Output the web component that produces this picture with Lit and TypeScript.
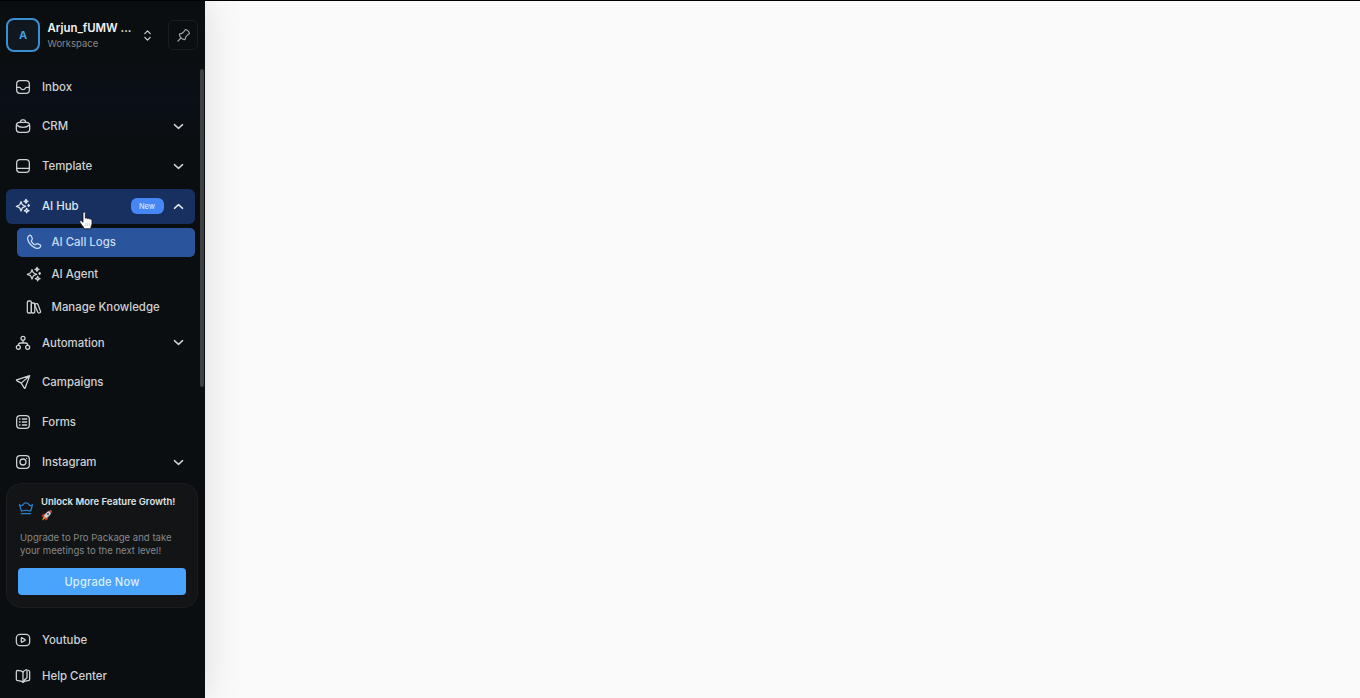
import { LitElement, html, css, svg, nothing } from "lit";
import { customElement, property } from "lit/decorators.js";
import { classMap } from "lit/directives/class-map.js";

const icons: Record<string, unknown> = {
  inbox: svg`
    <rect x="2.5" y="2.5" width="19" height="19" rx="5" />
    <path d="M2.5 12.5H6.6C7.6 12.5 8.1 13.2 8.5 14C9 15.2 9.8 16 12 16S15 15.2 15.5 14C15.9 13.2 16.4 12.5 17.4 12.5H21.5" />`,
  crm: svg`
    <rect x="2" y="6.5" width="20" height="15" rx="5" />
    <path d="M2.3 10.5C5 13 8.5 14 12 14S19 13 21.7 10.5M10.5 14H13.5M8 6.3C8.3 3.8 9 2.7 10.8 2.7H13.2C15 2.7 15.7 3.8 16 6.3" />`,
  template: svg`
    <rect x="2.5" y="2.5" width="19" height="19" rx="5" />
    <path d="M2.5 15.5H21.5" />`,
  sparkles: svg`
    <path d="M9 5.5L10.2 8.6C10.8 10.1 11.4 10.7 12.9 11.3L16 12.5L12.9 13.7C11.4 14.3 10.8 14.9 10.2 16.4L9 19.5L7.8 16.4C7.2 14.9 6.6 14.3 5.1 13.7L2 12.5L5.1 11.3C6.6 10.7 7.2 10.1 7.8 8.6Z" />
    <path d="M16.5 2L17.4 4.1L19.5 5L17.4 5.9L16.5 8L15.6 5.9L13.5 5L15.6 4.1Z" />
    <path d="M17.5 15.5L18.5 18L21 19L18.5 20L17.5 22.2L16.5 20L14 19L16.5 18Z" />
    <path d="M20.5 9.8L21.6 11.2L20.5 12.6L19.4 11.2Z" />`,
  phone: svg`
    <path d="M9.2 5.9L8.5 4.4C8.1 3.4 7.9 2.9 7.5 2.6C6.9 2 5.3 1.9 4.4 2.7C2.7 4 2 5.9 2.6 8.2C3.2 10.7 4.9 13.9 7.5 16.5S13.3 20.8 15.8 21.4C18.1 22 20 21.3 21.3 19.6C22.1 18.7 22 17.1 21.4 16.5C21.1 16.1 20.6 15.9 19.6 15.5L18.1 14.8C16.6 14.2 16.1 14.4 15 15.3C13.9 16.3 13.1 16.2 11.9 15.3C10.6 14.4 9.5 13.3 8.7 12.1C7.8 10.9 7.7 10.1 8.7 9C9.6 7.9 9.8 7.4 9.2 5.9Z" />`,
  library: svg`
    <rect x="2" y="3" width="6" height="18" rx="2" />
    <rect x="8" y="6" width="5.2" height="15" rx="1.8" />
    <path d="M13.2 9.2C13.1 8.2 13.5 7.7 14.4 7.4L15.8 7C16.9 6.7 17.4 7 17.8 8L21.8 18.6C22.1 19.6 21.8 20.2 21 20.5L19.6 20.9C18.7 21.2 18.1 20.9 17.7 20Z" />`,
  automation: svg`
    <circle cx="12" cy="5" r="3" />
    <circle cx="5" cy="18.5" r="3" />
    <circle cx="19" cy="18.5" r="3" />
    <path d="M12 8V12M5 15.5C5 13.2 6 12 8.2 12H15.8C18 12 19 13.2 19 15.5" />`,
  campaigns: svg`
    <path d="M22 2.5L2.5 8.7C2 9 2.1 9.7 2.6 10L9.3 13.7L14 21.2C14.4 21.8 15 21.7 15.2 21.1L22 2.5ZM22 2.5L9.3 13.7" />`,
  forms: svg`
    <rect x="2.5" y="2.5" width="19" height="19" rx="5" />
    <path d="M11 7.5H17.5M11 12H17.5M11 16.5H17.5M6.7 7.5H7.6M6.7 12H7.6M6.7 16.5H7.6" />`,
  instagram: svg`
    <rect x="2.5" y="2.5" width="19" height="19" rx="5" />
    <circle cx="12" cy="12" r="4.5" />
    <path d="M17.4 6.5H17.6" />`,
  youtube: svg`
    <rect x="2" y="3.5" width="20" height="17" rx="5.5" />
    <path d="M9.5 9V15C9.5 15.4 9.9 15.6 10.3 15.4L15.1 12.5C15.5 12.2 15.5 11.8 15.1 11.5L10.3 8.6C9.9 8.4 9.5 8.6 9.5 9Z" />`,
  help: svg`
    <path d="M12 6C10.5 4.3 7.8 3.6 4.2 3.5C2.9 3.5 2 4.2 2 5.5V16.8C2 18.2 2.7 18.8 4.2 18.9C7.8 19.1 10.5 19.8 12 21.5V6Z" />
    <path d="M12 21.5C13.5 19.8 16.2 19.1 19.8 18.9C21.3 18.8 22 18.2 22 16.8V5.5C22 4.3 21.2 3.7 20 3.5M12 6C13 4.7 14.6 3.6 16.6 2.6C17.5 2.2 18 2.6 18 3.5V14C18 15 17.4 15.6 16.6 16C14.6 17 13 18.5 12 21.5" />`,
  pin: svg`
    <path d="M3 21L8 16M13.3 18.6C9.6 17.7 6.3 14.4 5.4 10.7C5.2 10 5.5 9.5 6.2 9.2C7.6 8.7 9 9.1 10.3 8L13.8 4.5C14.4 3.8 14.3 2.8 15.5 2.6C17.4 2.3 21.7 6.6 21.4 8.5C21.2 9.7 20.2 9.6 19.5 10.2L16 13.7C14.9 15 15.3 16.4 14.8 17.8C14.5 18.5 14 18.8 13.3 18.6Z" />`,
  crown: svg`
    <path d="M5 16.5L2.2 7C4.5 9 6.8 8.6 8 6.5C9 3.5 15 3.5 16 6.5C17.2 8.6 19.5 9 21.8 7L19 16.5C14.5 15.5 9.5 15.5 5 16.5ZM5 20.5H19" />`,
  down: svg`<path d="M5.5 9L12 15L18.5 9" />`,
  up: svg`<path d="M5.5 15L12 9L18.5 15" />`,
  sort: svg`<path d="M7 8.5L12 3.5L17 8.5M7 15.5L12 20.5L17 15.5" />`,
};

@customElement("app-icon")
export class AppIcon extends LitElement {
  @property() name = "";

  static styles = css`
    :host {
      display: flex;
      flex: none;
      width: 16px;
      height: 16px;
    }

    svg {
      width: 100%;
      height: 100%;
      fill: none;
      stroke: currentColor;
      stroke-width: var(--icon-stroke, 1.9);
      stroke-linecap: round;
      stroke-linejoin: round;
    }
  `;

  render() {
    return html`<svg viewBox="0 0 24 24">${icons[this.name]}</svg>`;
  }
}

interface NavItem {
  label: string;
  icon: string;
  menu?: boolean;
  badge?: string;
  active?: boolean;
  children?: NavItem[];
}

const navItems: NavItem[] = [
  { label: "Inbox", icon: "inbox" },
  { label: "CRM", icon: "crm", menu: true },
  { label: "Template", icon: "template", menu: true },
  {
    label: "AI Hub",
    icon: "sparkles",
    menu: true,
    badge: "New",
    active: true,
    children: [
      { label: "AI Call Logs", icon: "phone", active: true },
      { label: "AI Agent", icon: "sparkles" },
      { label: "Manage Knowledge", icon: "library" },
    ],
  },
  { label: "Automation", icon: "automation", menu: true },
  { label: "Campaigns", icon: "campaigns" },
  { label: "Forms", icon: "forms" },
  { label: "Instagram", icon: "instagram", menu: true },
];

const footerItems: NavItem[] = [
  { label: "Youtube", icon: "youtube" },
  { label: "Help Center", icon: "help" },
];

@customElement("app-upgrade")
export class AppUpgrade extends LitElement {
  static styles = css`
    :host {
      display: block;
      box-sizing: border-box;
      height: 125px;
      margin: 1px 7px 0 6px;
      padding: 11px 11px 11px;
      border: 1px solid #1b1d20;
      border-radius: 15px;
      background: #121416;
    }

    .head {
      display: flex;
      align-items: center;
      gap: 7px;
      color: #dde3e6;
      font-size: 9.5px;
      font-weight: 600;
      line-height: 14px;
      white-space: nowrap;
    }

    .head app-icon {
      width: 16px;
      height: 16px;
      color: #2d7fca;
    }

    .rocket {
      display: block;
      width: 11px;
      height: 11px;
      margin-top: 1px;
    }

    p {
      margin: 10px 0 0 2px;
      color: #85888b;
      font-size: 9.55px;
      line-height: 13px;
      white-space: nowrap;
    }

    button {
      display: block;
      width: 168px;
      height: 27px;
      margin-top: 11px;
      padding: 0;
      border: 0;
      border-radius: 4px;
      background: #4ba4fc;
      color: #d9f0ff;
      font: 500 11.1px Inter, sans-serif;
      letter-spacing: 0.2px;
    }
  `;

  render() {
    return html`
      <div class="head">
        <app-icon name="crown"></app-icon>
        <div>
          Unlock More Feature Growth!
          <svg class="rocket" viewBox="0 0 22 22">
            <path d="M9 7L3 9L1 14L7 13Z" fill="#c9412f" />
            <path d="M15 13L13 19L8 21L9 15Z" fill="#c9412f" />
            <path d="M6 12L10 16L7 18L2 21L4 16Z" fill="#f0912e" />
            <path d="M21 1C15 1 10 4 6 12L10 16C18 12 21 7 21 1Z" fill="#cfd3d8" />
            <path d="M21 1L15 2L20 7Z" fill="#d0473b" />
            <circle cx="14" cy="8" r="2.2" fill="#3f566b" />
          </svg>
        </div>
      </div>
      <p>Upgrade to Pro Package and take<br />your meetings to the next level!</p>
      <button>Upgrade Now</button>
    `;
  }
}

@customElement("app-sidebar")
export class AppSidebar extends LitElement {
  static styles = css`
    :host {
      display: flex;
      flex-direction: column;
      flex: none;
      width: 205px;
      background: linear-gradient(#0b0e10 8%, #0a0f18 14%, #0b0e10 21%);
      box-shadow: 0 0 36px rgba(0, 0, 0, 0.13);
      color: #cfd2d4;
    }

    header {
      display: flex;
      align-items: center;
      height: 68px;
      padding: 0 6px;
      box-sizing: border-box;
      flex: none;
    }

    .avatar {
      display: grid;
      place-items: center;
      box-sizing: border-box;
      width: 34px;
      height: 34px;
      border: 2px solid #3a8fd3;
      border-radius: 8px;
      background: #10171e;
      color: #429ce4;
      font-size: 11px;
      font-weight: 700;
    }

    .workspace {
      width: 93px;
      margin-left: 7.5px;
      white-space: nowrap;
    }

    .workspace strong {
      display: block;
      color: #f2f3f4;
      font-size: 11.4px;
      font-weight: 600;
      line-height: 16px;
    }

    .workspace span {
      display: block;
      color: #85888b;
      font-size: 9.5px;
      line-height: 15px;
    }

    .sort {
      --icon-stroke: 2.2;
      width: 13px;
      height: 13px;
    }

    .pin {
      display: grid;
      place-items: center;
      box-sizing: border-box;
      width: 30px;
      height: 30px;
      margin-left: 14.5px;
      border: 1px solid #1a1d1f;
      border-radius: 5px;
      color: #a3a6a8;
    }

    .pin app-icon {
      width: 15px;
      height: 15px;
    }

    .scroller {
      display: flex;
      justify-content: space-between;
      height: 413px;
      overflow: hidden;
      flex: none;
    }

    .thumb {
      width: 4px;
      height: 318px;
      margin-right: 1px;
      border-radius: 2px;
      background: #3e4042;
    }

    nav {
      display: flex;
      flex-direction: column;
      gap: 4px;
      width: 188.5px;
      margin-left: 6px;
    }

    .item {
      display: flex;
      align-items: center;
      box-sizing: border-box;
      height: 35.85px;
      padding: 0 9px 0.6px;
      gap: 11px;
      border-radius: 6px;
      font-size: 11.4px;
      font-weight: 500;
      flex: none;
      white-space: nowrap;
    }

    .item.active {
      background: #17305f;
      color: #dfe6f0;
    }

    .item .label {
      flex: 1;
    }

    .chevron {
      --icon-stroke: 2.3;
      width: 15px;
      height: 15px;
    }

    .badge {
      width: 33px;
      height: 16px;
      margin-right: -4px;
      border-radius: 6px;
      background: #4687f5;
      color: #cfe4ff;
      font-size: 7.5px;
      line-height: 17px;
      text-align: center;
    }

    .item.sub {
      height: 28.2px;
      margin-left: 11px;
      gap: 9.5px;
      border-radius: 5px;
    }

    .item.sub.active {
      background: #2a549b;
      color: #c8daf5;
    }

    .footer {
      gap: 0;
      margin-top: 14.5px;
    }
  `;

  private renderItem(item: NavItem, sub = false): unknown {
    return html`
      <div class=${classMap({ item: true, sub, active: !!item.active })}>
        <app-icon name=${item.icon}></app-icon>
        <span class="label">${item.label}</span>
        ${item.badge ? html`<span class="badge">${item.badge}</span>` : nothing}
        ${item.menu
          ? html`<app-icon class="chevron" name=${item.children ? "up" : "down"}></app-icon>`
          : nothing}
      </div>
      ${item.children?.map((child) => this.renderItem(child, true))}
    `;
  }

  render() {
    return html`
      <header>
        <div class="avatar">A</div>
        <div class="workspace">
          <strong>Arjun_fUMW ...</strong>
          <span>Workspace</span>
        </div>
        <app-icon class="sort" name="sort"></app-icon>
        <div class="pin"><app-icon name="pin"></app-icon></div>
      </header>
      <div class="scroller">
        <nav>${navItems.map((item) => this.renderItem(item))}</nav>
        <div class="thumb"></div>
      </div>
      <app-upgrade></app-upgrade>
      <nav class="footer">${footerItems.map((item) => this.renderItem(item))}</nav>
    `;
  }
}

@customElement("app-root")
export class AppRoot extends LitElement {
  static styles = css`
    :host {
      display: flex;
      position: relative;
      box-sizing: border-box;
      height: 698px;
      overflow: hidden;
      border-top: 1px solid #000;
      background: #fafafa;
      font-family: Inter, sans-serif;
    }

    .cursor {
      position: absolute;
      left: 79px;
      top: 210px;
      width: 14px;
      height: 19px;
    }
  `;

  render() {
    return html`
      <app-sidebar></app-sidebar>
      <main></main>
      <svg class="cursor" viewBox="0 0 14 19">
        <path
          d="M4 2.2C4 .5 6.4 .5 6.4 2.2V7.2C7.2 6.6 8.3 6.9 8.6 7.6C9.4 7.1 10.5 7.4 10.8 8.2C12 7.8 13 8.5 13 9.7V12.5C13 14 12 15.2 11.7 17.8H5C4.8 16 2.8 14.2 1 11.4C.2 10 1.6 9 2.7 10L4 11.3Z"
          fill="#fff"
          stroke="#111"
          stroke-width="0.8"
        />
        <path d="M6.8 12V15M8.6 12V15M10.4 12V15" stroke="#aaa" stroke-width="0.5" />
      </svg>
    `;
  }
}
